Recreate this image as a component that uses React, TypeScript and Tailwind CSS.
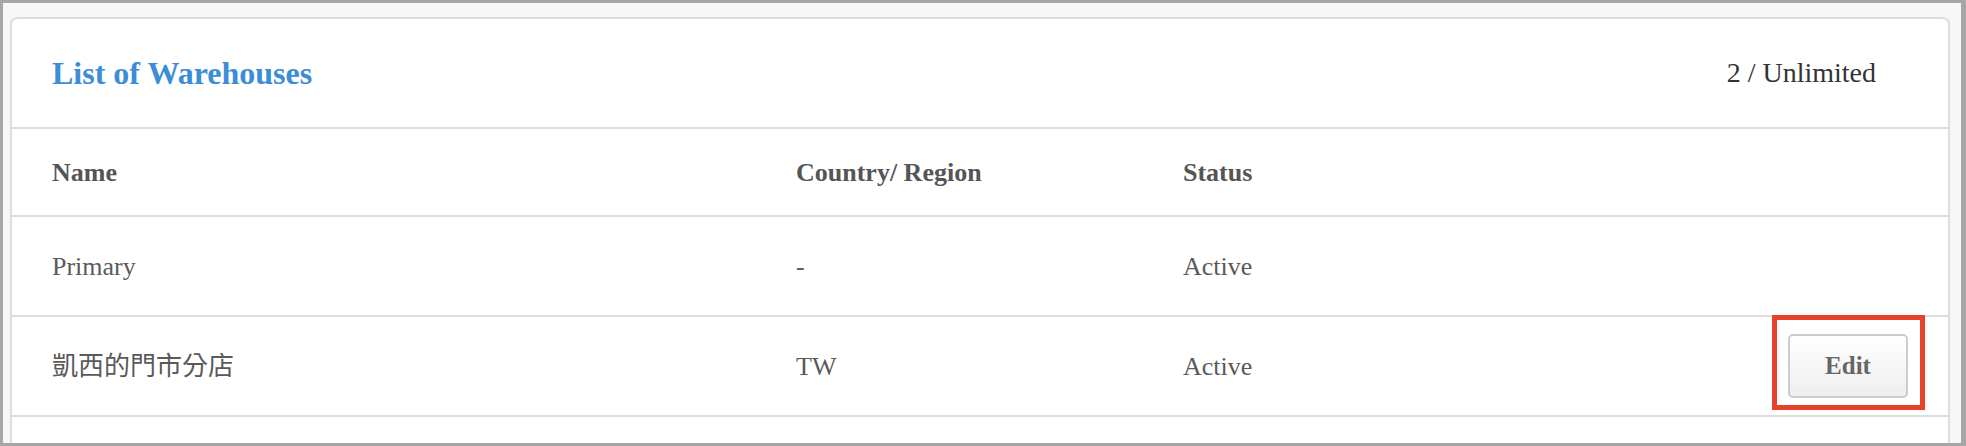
import React from "react";

const rows = [
  { name: "Primary", country: "-", status: "Active", edit: false },
  { name: "凱西的門市分店", country: "TW", status: "Active", edit: true },
];

export default function App() {
  return (
    <div
      className="h-[446px] w-[1966px] overflow-hidden border-[3px] border-r-[5px] border-[#a6a6a6] bg-[#f7f7f7] pl-[7px] pr-[11px] pt-[14px]"
      style={{ fontFamily: '"Liberation Serif", "Noto Sans CJK TC", serif' }}
    >
      <div className="h-[600px] rounded-t-[7px] border-2 border-[#dddddd] bg-white">
        <div className="flex h-[110px] items-center justify-between border-b-2 border-[#dddddd] pl-[40px] pr-[72px]">
          <h1 className="text-[32px] font-bold leading-none text-[#3c8dd8]">List of Warehouses</h1>
          <span className="text-[28px] leading-none text-[#333333]">2 / Unlimited</span>
        </div>
        <div className="grid h-[88px] grid-cols-[744px_387px_1fr_auto] items-center border-b-2 border-[#dddddd] text-[26px] font-bold text-[#555555]">
          <div className="pl-[40px]">Name</div>
          <div className="pl-[40px]">Country/ Region</div>
          <div className="pl-[40px]">Status</div>
          <div className="pr-[40px]" />
        </div>
        {rows.map((r) => (
          <div
            key={r.name}
            className="grid h-[100px] grid-cols-[744px_387px_1fr_auto] items-center border-b-2 border-[#dddddd] text-[26px] text-[#5a5a5a]"
          >
            <div className="pl-[40px]">{r.name}</div>
            <div className="pl-[40px]">{r.country}</div>
            <div className="pl-[40px]">{r.status}</div>
            <div className="pr-[40px]">
              {r.edit && (
                <div className="relative">
                  <button className="h-[64px] w-[120px] rounded-[5px] border-2 border-[#cccccc] bg-linear-to-b from-white to-[#eeeeee] text-[25px] font-bold text-[#666666]">
                    Edit
                  </button>
                  <span className="pointer-events-none absolute -bottom-[12px] -left-[16px] -right-[17px] -top-[19px] border-[5px] border-[#e8412b]" />
                </div>
              )}
            </div>
          </div>
        ))}
      </div>
    </div>
  );
}
